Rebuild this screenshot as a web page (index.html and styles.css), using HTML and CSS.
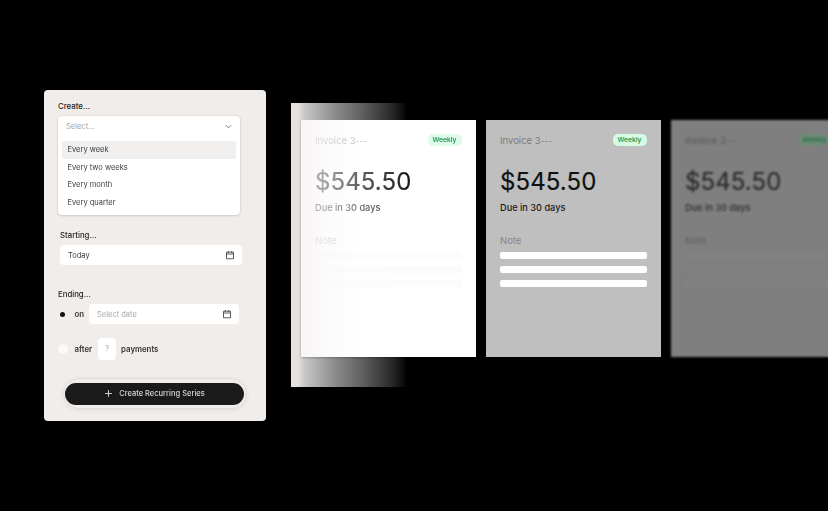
FILE: index.html
```html
<!DOCTYPE html>
<html lang="en">
<head>
<meta charset="utf-8">
<title>Recurring Series</title>
<link rel="stylesheet" href="styles.css">
</head>
<body>
<main class="stage">
  <form class="panel">
    <section class="create">
      <div class="label">Create...</div>
      <div class="dropdown">
        <div class="select-row"><span class="placeholder">Select...</span>
          <svg class="chev" viewBox="0 0 10 10"><path d="M2 3.5 5 6.5 8 3.5"/></svg>
        </div>
        <ul class="options">
          <li class="option active">Every week</li>
          <li class="option">Every two weeks</li>
          <li class="option">Every month</li>
          <li class="option">Every quarter</li>
        </ul>
      </div>
    </section>
    <section class="starting">
      <div class="label">Starting...</div>
      <div class="field wide"><span>Today</span>
        <svg class="cal" viewBox="0 0 10 10"><path d="M1.5 2.2h7v6.6h-7zM1.5 4h7M3.3 1v1.6M6.7 1v1.6"/></svg>
      </div>
    </section>
    <section class="ending">
      <div class="label">Ending...</div>
      <div class="end-row on-row">
        <span class="radio checked"></span><span class="end-word">on</span>
        <div class="field date"><span class="placeholder">Select date</span>
          <svg class="cal" viewBox="0 0 10 10"><path d="M1.5 2.2h7v6.6h-7zM1.5 4h7M3.3 1v1.6M6.7 1v1.6"/></svg>
        </div>
      </div>
      <div class="end-row after-row">
        <span class="radio"></span><span class="end-word">after</span>
        <span class="count">?</span><span class="end-word">payments</span>
      </div>
    </section>
    <div class="cta-ring">
      <button type="button" class="cta">
        <svg class="plus" viewBox="0 0 10 10"><path d="M5 1.2v7.6M1.2 5h7.6"/></svg>
        <span>Create Recurring Series</span>
      </button>
    </div>
  </form>
  <div class="cards">
    <div class="backdrop"></div>
    <article class="card first">
      <header class="card-head"><span class="inv">Invoice 3<span class="dashes">---</span></span><span class="badge">Weekly</span></header>
      <div class="amount">$545.50</div>
      <div class="due">Due in 30 days</div>
      <div class="note">Note</div>
      <div class="line"></div><div class="line"></div><div class="line"></div>
    </article>
    <article class="card second">
      <header class="card-head"><span class="inv">Invoice 3<span class="dashes">---</span></span><span class="badge">Weekly</span></header>
      <div class="amount">$545.50</div>
      <div class="due">Due in 30 days</div>
      <div class="note">Note</div>
      <div class="line"></div><div class="line"></div><div class="line"></div>
    </article>
    <article class="card third">
      <header class="card-head"><span class="inv">Invoice 3<span class="dashes">---</span></span><span class="badge">Weekly</span></header>
      <div class="amount">$545.50</div>
      <div class="due">Due in 30 days</div>
      <div class="note">Note</div>
      <div class="line"></div><div class="line"></div><div class="line"></div>
    </article>
  </div>
</main>
</body>
</html>
```
FILE: styles.css
```css
* { box-sizing: border-box; }
html, body { margin: 0; height: 100%; background: #000; }
body { width: 828px; height: 511px; overflow: hidden; font-family: Inter, "Liberation Sans", sans-serif; color: #1c1a1a; }
.stage { display: flex; align-items: flex-start; padding: 90px 0 0 44px; width: 828px; height: 511px; overflow: hidden; filter: blur(.3px); }

.panel { flex: none; width: 222px; height: 330.5px; background: #f1edeb; border-radius: 4px; padding: 11px 0 0; display: flex; flex-direction: column; }
.label { font-size: 7.8px; line-height: 11px; font-weight: 500; color: #222; }
.create { padding: 0 26px 0 14px; }
.create .label { margin-bottom: 4px; }
.dropdown { background: #fff; border-radius: 4px; box-shadow: 0 0 2px rgba(60,50,50,.22), 0 1px 2px rgba(60,50,50,.12); height: 99px; }
.select-row { display: flex; align-items: center; justify-content: space-between; height: 21px; padding: 0 7px 0 8px; margin-bottom: 4px; }
.placeholder { font-size: 7.5px; color: #a8a6a6; }
.chev { width: 9px; height: 9px; fill: none; stroke: #777; stroke-width: 1.1; }
.options { list-style: none; margin: 0; padding: 0 4px; }
.option { height: 17.5px; line-height: 17.5px; font-size: 7.5px; color: #3c3c3c; padding-left: 5.5px; border-radius: 2px; }
.option.active { background: #f1efee; }

.starting { padding: 0 24px 0 16px; margin-top: 15px; }
.starting .label { margin-bottom: 4px; }
.field { background: #fff; border-radius: 4px; height: 20px; display: flex; align-items: center; justify-content: space-between; font-size: 7.5px; color: #3c3c3c; padding: 0 7px 0 8px; }
.cal { width: 10px; height: 10px; fill: none; stroke: #333; stroke-width: .8; }

.ending { padding: 0 27px 0 14px; margin-top: 24px; }
.ending .label { margin-bottom: 4px; }
.end-row { display: flex; align-items: center; }
.on-row { height: 20px; }
.after-row { height: 22px; margin-top: 13.5px; }
.radio { width: 10px; height: 10px; border-radius: 50%; background: #fbfafa; display: flex; align-items: center; justify-content: center; flex: none; margin-right: 7px; margin-left: -.5px; }
.radio.checked { background: transparent; }
.radio.checked::after { content: ""; width: 5px; height: 5px; border-radius: 50%; background: #111; }
.end-word { font-size: 7.8px; font-weight: 600; color: #333; }
.on-row .end-word { margin-right: 5px; }
.date { flex: 1; }
.count { width: 18px; height: 22px; margin: 0 5px 0 6px; background: #fff; border-radius: 4px; display: flex; align-items: center; justify-content: center; font-size: 7.5px; color: #aaa; }

.cta-ring { margin: 18px 0 0 19px; width: 184px; height: 31px; border-radius: 16px; border: 1px solid #dfdbd9; padding: 4px 2px 4px 1px; box-shadow: 0 1px 4px rgba(0,0,0,.07); }
.cta { width: 179px; height: 22px; margin: 0; border: 0; border-radius: 11px; background: #1b1a1a; color: #d8d6d6; font: 500 7.5px Inter, "Liberation Sans", sans-serif; display: flex; align-items: center; justify-content: center; gap: 6px; padding: 0; }
.plus { width: 9px; height: 9px; fill: none; stroke: #e4e2e2; stroke-width: 1; }

.cards { position: relative; flex: none; margin: 30px 0 0 34.5px; display: flex; gap: 9.5px; }
.backdrop { position: absolute; left: -9.5px; top: -17px; width: 120px; height: 284px; background: linear-gradient(90deg, #e9e4e2 0%, #e4e0de 6%, #c6c5c4 12%, #8e8e8e 36%, #5a5a5a 62%, #242424 86%, #000 97%); }
.card { position: relative; width: 175.5px; height: 237px; flex: none; padding: 14px 14.5px 0 14.5px; }
.first { background: #fff; box-shadow: 0 1px 2px rgba(0,0,0,.25); }
.first::after { content: ""; position: absolute; inset: 0; width: 115px; background: linear-gradient(90deg, rgba(246,243,242,.78) 0%, rgba(250,249,248,.62) 22%, rgba(255,255,255,.3) 55%, rgba(255,255,255,0) 100%); pointer-events: none; }
.second { background: #bfbfbf; }
.third { background: #7f7f7f; filter: blur(1.3px); }
.card-head { display: flex; align-items: center; justify-content: space-between; height: 12px; }
.inv { font-size: 9.5px; color: #7c7c7c; }
.dashes { font-size: 8px; letter-spacing: .2px; }
.badge { font-size: 6.8px; font-weight: 500; line-height: 12px; height: 12px; padding: 0 5px; border-radius: 5px; background: #d5fbe3; color: #0f8a48; }
.amount { font-size: 24px; line-height: 28px; margin-top: 22px; color: #111; letter-spacing: .1px; -webkit-text-stroke: .2px currentColor; }
.due { font-size: 9.2px; font-weight: 500; line-height: 12px; margin-top: 6px; color: #1a1a1a; }
.note { font-size: 9.5px; line-height: 12px; margin-top: 21px; color: #858585; }
.line { height: 7px; background: #fff; border-radius: 2px; margin-top: 7px; }
.note + .line { margin-top: 5px; }
.first .line { background: #fbfbfb; }
.first .inv { color: #a4a4a4; }
.first .note { color: #bcbcbc; }
.first .badge { background: #dcfbe8; }
.third .inv { color: #555; }
.third .amount { color: #2c2c2c; }
.third .due { color: #2c2c2c; }
.third .note { color: #5c5c5c; }
.third .line { background: #818181; }
.third .badge { background: #6f8a78; color: #1f6b3d; }
```
